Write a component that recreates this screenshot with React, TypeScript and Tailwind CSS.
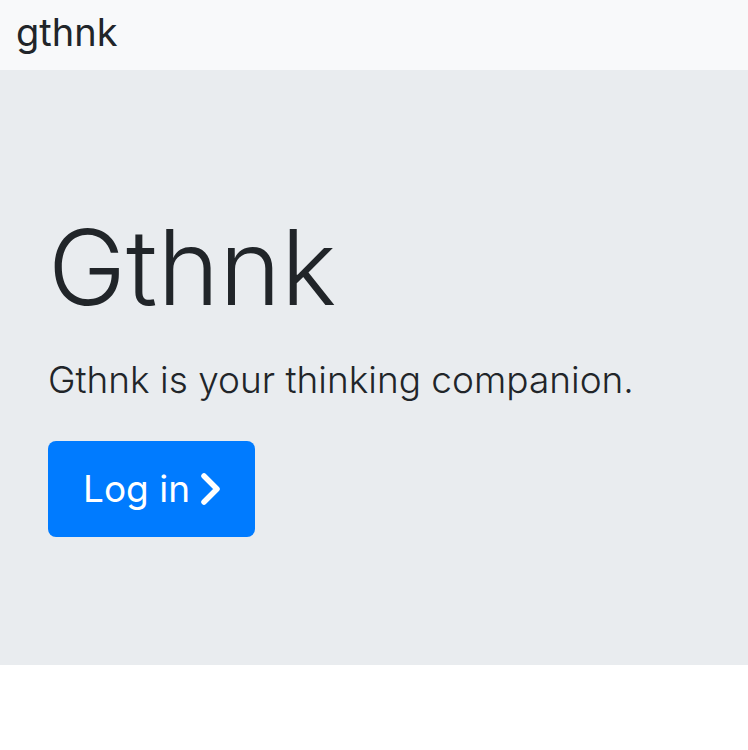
import React from "react";

export default function App() {
  const font = { fontFamily: "Inter, 'Noto Sans', sans-serif" };
  return (
    <div className="w-[748px] h-[750px] bg-white text-[#212529]" style={font}>
      <nav className="h-[70px] bg-[#f8f9fa] flex items-center px-[16px] pb-[6px]">
        <span className="text-[38px] leading-none font-normal">gthnk</span>
      </nav>
      <section className="bg-[#e9ecef] h-[595px] pl-[48px] pt-[134px]">
        <h1 className="text-[105px] leading-[126px] font-light">Gthnk</h1>
        <p className="mt-[23px] text-[37px] leading-[54px] font-light">Gthnk is your thinking companion.</p>
        <button className="mt-[34px] w-[207px] h-[96px] bg-[#007bff] rounded-[8px] text-white text-[37px] font-normal flex items-center justify-center gap-[10px] pl-[2px]">
          <span>Log in</span>
          <svg width="22" height="34" viewBox="0 0 22 34" fill="none">
            <path d="M4 4 L17 17 L4 30" stroke="white" strokeWidth="5.5" strokeLinecap="round" strokeLinejoin="round" />
          </svg>
        </button>
      </section>
    </div>
  );
}
